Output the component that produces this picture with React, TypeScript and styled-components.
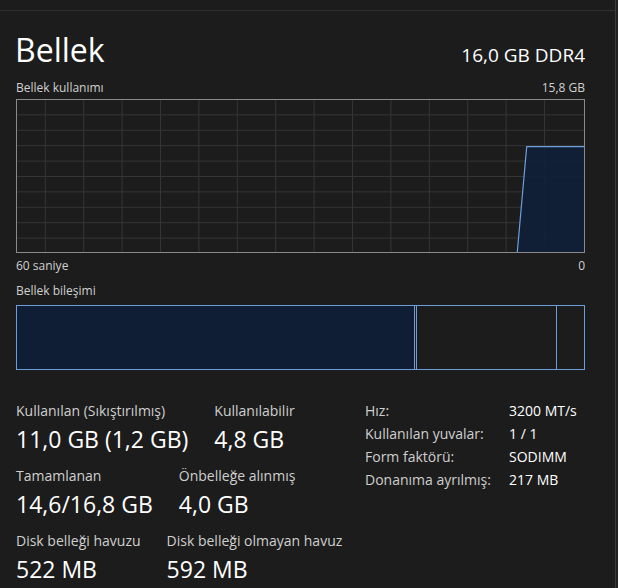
import React from "react";
import styled, { createGlobalStyle } from "styled-components";

const Global = createGlobalStyle`
  html, body { margin: 0; padding: 0; background: #1c1c1c; }
  body { font-family: "Open Sans", "Noto Sans", sans-serif; color: #fff; }
  * { box-sizing: border-box; }
`;

const Frame = styled.div`
  display: flex;
  width: 618px;
  height: 588px;
  overflow: hidden;
  background: #1c1c1c;
`;

const Main = styled.div`
  width: 615px;
  display: flex;
  flex-direction: column;
`;

const TopStrip = styled.div`
  flex-shrink: 0;
  height: 11px;
  border-bottom: 1px solid #2f2f2f;
`;

const EdgeLine = styled.div`
  width: 1px;
  background: #3b3b3b;
`;

const EdgeStrip = styled.div`
  flex: 1;
  background: #202020;
`;

const Panel = styled.div`
  flex-shrink: 0;
  padding: 0 30px 0 16px;
  display: flex;
  flex-direction: column;
`;

const Header = styled.div`
  display: flex;
  justify-content: space-between;
  align-items: baseline;
  margin-top: 17px;
  height: 43px;
  flex-shrink: 0;
`;

const Title = styled.div`
  font-size: 32px;
  font-weight: 400;
  line-height: 43px;
  margin-left: -1px;
`;

const Spec = styled.div`
  font-size: 19px;
  line-height: 43px;
`;

const Caption = styled.div<{ $gap: number }>`
  display: flex;
  flex-shrink: 0;
  justify-content: space-between;
  margin-top: ${(p) => p.$gap}px;
  font-size: 12px;
  line-height: 16px;
  color: #d0d0d0;
  height: 16px;
`;

const GraphBox = styled.div`
  flex-shrink: 0;
  margin-top: 3px;
  width: 569px;
  height: 154px;
  border: 1px solid #8a8a8a;
  background: #1c1c1c;
`;

const CompositionBar = styled.div`
  display: flex;
  flex-shrink: 0;
  margin-top: 6px;
  width: 569px;
  height: 65px;
  border: 1px solid #6d9ed9;
`;

const Segment = styled.div<{ $w?: number; $fill?: boolean; $divider?: boolean }>`
  ${(p) => (p.$w !== undefined ? `width: ${p.$w}px;` : "flex: 1;")}
  flex-shrink: 0;
  background: ${(p) => (p.$fill ? "#0f1d35" : "transparent")};
  border-right: ${(p) => (p.$divider ? "1px solid #6d9ed9" : "none")};
`;

const Stats = styled.div`
  display: flex;
  flex-shrink: 0;
  margin-top: 30px;
`;

const LeftStats = styled.div`
  width: 349px;
  display: flex;
  flex-direction: column;
  gap: 9px;
`;

const StatRow = styled.div`
  display: flex;
  gap: 26px;
`;

const Stat = styled.div`
  display: flex;
  flex-direction: column;
`;

const StatLabel = styled.div`
  font-size: 14px;
  line-height: 22px;
  color: #cfcfcf;
  white-space: nowrap;
`;

const StatValue = styled.div`
  font-size: 23px;
  line-height: 34px;
  color: #ffffff;
  white-space: nowrap;
`;

const InfoTable = styled.div`
  display: grid;
  grid-template-columns: 144px auto;
  grid-auto-rows: 23px;
  align-content: start;
  padding-top: 1px;
  font-size: 14px;
  line-height: 20px;
`;

const InfoKey = styled.div`
  color: #cfcfcf;
  white-space: nowrap;
`;

const InfoVal = styled.div`
  color: #ffffff;
  white-space: nowrap;
`;

const W = 567;
const H = 152;

function UsageGraph() {
  const vLines: number[] = [];
  for (let k = 0; k < 14; k++) vLines.push(28.3 + 38.4 * k);
  const hLines: number[] = [];
  for (let k = 1; k < 10; k++) hLines.push(15.4 * k - 0.5);
  const pts = `500.3,${H} 509.7,46.7 ${W},46.7 ${W},${H}`;
  return (
    <svg width={W} height={H} viewBox={`0 0 ${W} ${H}`} style={{ display: "block" }}>
      {vLines.map((x) => (
        <line key={"v" + x} x1={x} x2={x} y1={0} y2={H} stroke="#353535" strokeWidth={1} />
      ))}
      {hLines.map((y) => (
        <line key={"h" + y} x1={0} x2={W} y1={y} y2={y} stroke="#353535" strokeWidth={1} />
      ))}
      <polygon points={pts} fill="#0f1f38" fillOpacity={0.92} />
      <polyline
        points={`500.3,${H} 509.7,46.7 ${W},46.7`}
        fill="none"
        stroke="#6d9ed9"
        strokeWidth={1.2}
      />
    </svg>
  );
}

const leftRows = [
  [
    { label: "Kullanılan (Sıkıştırılmış)", value: "11,0 GB (1,2 GB)" },
    { label: "Kullanılabilir", value: "4,8 GB" },
  ],
  [
    { label: "Tamamlanan", value: "14,6/16,8 GB" },
    { label: "Önbelleğe alınmış", value: "4,0 GB" },
  ],
  [
    { label: "Disk belleği havuzu", value: "522 MB" },
    { label: "Disk belleği olmayan havuz", value: "592 MB" },
  ],
];

const info = [
  ["Hız:", "3200 MT/s"],
  ["Kullanılan yuvalar:", "1 / 1"],
  ["Form faktörü:", "SODIMM"],
  ["Donanıma ayrılmış:", "217 MB"],
];

export default function App() {
  return (
    <>
      <Global />
      <Frame>
        <Main>
          <TopStrip />
          <Panel>
            <Header>
              <Title>Bellek</Title>
              <Spec>16,0 GB DDR4</Spec>
            </Header>
            <Caption $gap={9}>
              <span>Bellek kullanımı</span>
              <span>15,8 GB</span>
            </Caption>
            <GraphBox>
              <UsageGraph />
            </GraphBox>
            <Caption $gap={5}>
              <span>60 saniye</span>
              <span>0</span>
            </Caption>
            <Caption $gap={9}>
              <span>Bellek bileşimi</span>
            </Caption>
            <CompositionBar>
              <Segment $w={398} $fill $divider />
              <Segment $w={2} $divider />
              <Segment $w={140} $divider />
              <Segment />
            </CompositionBar>
            <Stats>
              <LeftStats>
                {leftRows.map((row, i) => (
                  <StatRow key={i}>
                    {row.map((s) => (
                      <Stat key={s.label}>
                        <StatLabel>{s.label}</StatLabel>
                        <StatValue>{s.value}</StatValue>
                      </Stat>
                    ))}
                  </StatRow>
                ))}
              </LeftStats>
              <InfoTable>
                {info.map(([k, v]) => (
                  <React.Fragment key={k}>
                    <InfoKey>{k}</InfoKey>
                    <InfoVal>{v}</InfoVal>
                  </React.Fragment>
                ))}
              </InfoTable>
            </Stats>
          </Panel>
        </Main>
        <EdgeLine />
        <EdgeStrip />
      </Frame>
    </>
  );
}
